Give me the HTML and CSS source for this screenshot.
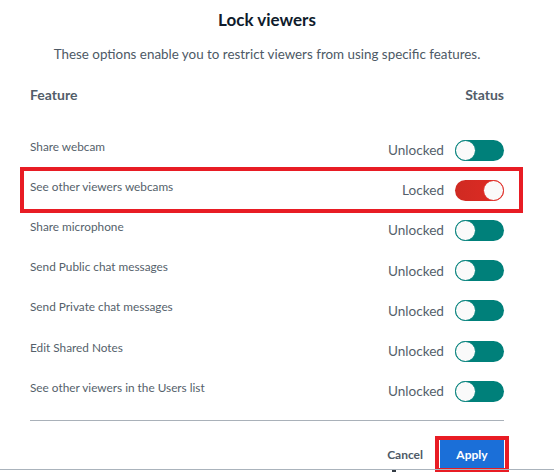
FILE: index.html
```html
<!DOCTYPE html>
<html lang="en">
<head>
<meta charset="utf-8">
<title>Lock viewers</title>
<link rel="stylesheet" href="styles.css">
</head>
<body>
<div class="dialog">
  <h1 class="title">Lock viewers</h1>
  <p class="subtitle">These options enable you to restrict viewers from using specific features.</p>
  <div class="head-row">
    <span>Feature</span>
    <span>Status</span>
  </div>
  <div class="rows">
    <div class="row">
      <span class="feature">Share webcam</span>
      <span class="status">Unlocked</span>
      <span class="toggle"><span class="knob"></span></span>
    </div>
    <div class="row row-marked">
      <span class="feature">See other viewers webcams</span>
      <span class="status">Locked</span>
      <span class="toggle toggle-on"><span class="knob"></span></span>
    </div>
    <div class="row">
      <span class="feature">Share microphone</span>
      <span class="status">Unlocked</span>
      <span class="toggle"><span class="knob"></span></span>
    </div>
    <div class="row">
      <span class="feature">Send Public chat messages</span>
      <span class="status">Unlocked</span>
      <span class="toggle"><span class="knob"></span></span>
    </div>
    <div class="row">
      <span class="feature">Send Private chat messages</span>
      <span class="status">Unlocked</span>
      <span class="toggle"><span class="knob"></span></span>
    </div>
    <div class="row">
      <span class="feature">Edit Shared Notes</span>
      <span class="status">Unlocked</span>
      <span class="toggle"><span class="knob"></span></span>
    </div>
    <div class="row">
      <span class="feature">See other viewers in the Users list</span>
      <span class="status">Unlocked</span>
      <span class="toggle"><span class="knob"></span></span>
    </div>
  </div>
  <div class="divider"></div>
  <div class="footer">
    <button class="btn-cancel">Cancel</button>
    <button class="btn-apply">Apply</button>
  </div>
  <div class="bottom-line"><span class="tick"></span></div>
</div>
</body>
</html>
```

FILE: styles.css
```css
* { box-sizing: border-box; }
html, body { margin: 0; padding: 0; background: #ffffff; }
body {
  font-family: Lato, "Open Sans", "Liberation Sans", sans-serif;
  color: #545f6b;
  width: 554px;
  height: 472px;
  overflow: hidden;
}
.dialog {
  padding: 8px 50px 0 30px;
}
.title {
  margin: 0;
  font-size: 17px;
  line-height: 24px;
  font-weight: 700;
  color: #0f1b2c;
  text-align: center;
}
.subtitle {
  margin: 12px 0 0;
  font-size: 13.4px;
  line-height: 20px;
  color: #4d5965;
  text-align: center;
}
.head-row {
  margin-top: 21px;
  display: flex;
  justify-content: space-between;
  font-size: 14px;
  line-height: 20px;
  font-weight: 700;
  color: #525d69;
}
.rows {
  margin-top: 25px;
  display: flex;
  flex-direction: column;
}
.row {
  position: relative;
  height: 40.2px;
  display: flex;
  align-items: center;
}
.row-marked::after {
  content: "";
  position: absolute;
  left: -10px;
  right: -19px;
  top: -3px;
  bottom: -3px;
  border: 4.5px solid #e81c24;
}
.feature {
  flex: 1;
  font-size: 11.8px;
  line-height: 16px;
  color: #555f6b;
  margin-bottom: 7px;
}
.status {
  font-size: 13.6px;
  line-height: 18px;
  color: #545f6b;
  margin-right: 11px;
}
.toggle {
  width: 49px;
  height: 21px;
  border-radius: 11px;
  background: #00807a;
  display: flex;
  align-items: center;
  padding: 0;
}
.knob {
  width: 21px;
  height: 21px;
  border-radius: 50%;
  background: #fafafa;
  border: 1.5px solid #00807a;
}
.toggle-on {
  background: linear-gradient(90deg, #cf2a22, #e02b24);
  justify-content: flex-end;
}
.toggle-on .knob {
  border-color: #e02b24;
}
.divider {
  margin-top: 9px;
  height: 1px;
  background: #a9b1b9;
}
.footer {
  margin-top: 19px;
  display: flex;
  justify-content: flex-end;
  align-items: center;
  gap: 17px;
}
.btn-cancel {
  border: 0;
  background: transparent;
  padding: 0;
  font-family: inherit;
  font-size: 12px;
  font-weight: 700;
  color: #4e5a66;
}
.btn-apply {
  position: relative;
  border: 0;
  width: 64px;
  height: 28px;
  background: #1b6fd8;
  color: #ffffff;
  font-family: inherit;
  font-size: 12px;
  font-weight: 700;
  padding: 0;
}
.btn-apply::after {
  content: "";
  position: absolute;
  left: -5px;
  right: -5px;
  top: -4px;
  bottom: -4px;
  border: 4px solid #e81c24;
}
.bottom-line {
  position: relative;
  margin: 1px -50px 0 -30px;
  height: 1px;
  background: #aab3bc;
}
.tick {
  position: absolute;
  left: 392px;
  top: 1px;
  width: 4px;
  height: 2px;
  background: #333b44;
}
```
